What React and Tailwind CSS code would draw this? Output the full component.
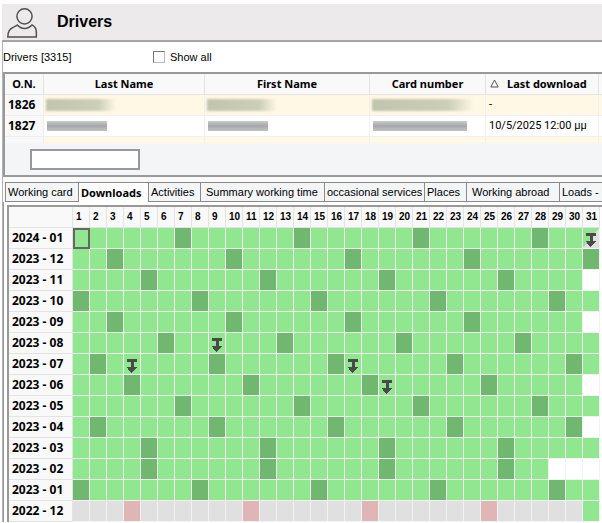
const columns = [
  { label: 'O.N.', width: 'w-[39px]' },
  { label: 'Last Name', width: 'w-[161px]' },
  { label: 'First Name', width: 'w-[165px]' },
  { label: 'Card number', width: 'w-[116px]' },
  { label: 'Last download', width: 'w-[113px]', sorted: true },
]

const drivers = [
  { on: '1826', last: '-', tinted: true },
  { on: '1827', last: '10/5/2025 12:00 μμ', tinted: false },
]

const tabs = [
  { label: 'Working card', width: 'w-[73px]' },
  { label: 'Downloads', width: 'w-[70px]', active: true },
  { label: 'Activities', width: 'w-[52px]' },
  { label: 'Summary working time', width: 'w-[124px]', padded: true },
  { label: 'occasional services', width: 'w-[100px]' },
  { label: 'Places', width: 'w-[42px]' },
  { label: 'Working abroad', width: 'w-[93px]', padded: true },
  { label: 'Loads - U', width: 'w-[110px]' },
]

// sunday = first Sunday of the month, marks = days with a card download
const months = [
  { label: '2024 - 01', sunday: 7, days: 31, marks: [31] },
  { label: '2023 - 12', sunday: 3, days: 31, marks: [] },
  { label: '2023 - 11', sunday: 5, days: 30, marks: [] },
  { label: '2023 - 10', sunday: 1, days: 31, marks: [] },
  { label: '2023 - 09', sunday: 3, days: 30, marks: [] },
  { label: '2023 - 08', sunday: 6, days: 31, marks: [9] },
  { label: '2023 - 07', sunday: 2, days: 31, marks: [4, 17] },
  { label: '2023 - 06', sunday: 4, days: 30, marks: [19] },
  { label: '2023 - 05', sunday: 7, days: 31, marks: [] },
  { label: '2023 - 04', sunday: 2, days: 30, marks: [] },
  { label: '2023 - 03', sunday: 5, days: 31, marks: [] },
  { label: '2023 - 02', sunday: 5, days: 28, marks: [] },
  { label: '2023 - 01', sunday: 1, days: 31, marks: [] },
  { label: '2022 - 12', sunday: 4, days: 31, marks: [], coveredFrom: 31 },
]

const dayNumbers = Array.from({ length: 31 }, (_, i) => i + 1)

function cellColor(month, day) {
  if (day > month.days) return 'bg-white'
  const isSunday = day % 7 === month.sunday % 7
  if (month.coveredFrom && day < month.coveredFrom) {
    return isSunday ? 'bg-[#dfb5b5]' : 'bg-[#e0e0e0]'
  }
  if (month.label === '2024 - 01' && day === 31) {
    return 'bg-linear-to-br from-[#90e790] from-50% to-[#e0e0e0] to-50%'
  }
  return isSunday ? 'bg-[#70b770]' : 'bg-[#90e790]'
}

function UserIcon() {
  return (
    <svg className="h-8 w-8" viewBox="0 0 32 32" fill="none" stroke="#505050" strokeWidth="1.5">
      <circle cx="17.5" cy="10.3" r="7.6" />
      <path d="M0.8 31C0.8 26 2 23 6 21.5C7.5 20.5 9 20 10.3 19C14 23.5 21 23.5 25 19C27 20.3 30 20.5 29.3 31Z" />
    </svg>
  )
}

function DownloadMark() {
  return (
    <svg className="mx-auto mt-1 block h-[14px] w-[10px]" viewBox="0 0 10 14" fill="#4a4a4a" shapeRendering="crispEdges">
      <path d="M0 0H10V3H7V8H10V9H9V10H8V11H7V12H6V13H5V14H4V13H3V12H2V11H1V9H0V8H4V3H0Z" />
    </svg>
  )
}

function Blurred({ tinted, wide }) {
  if (tinted) {
    return (
      <span
        className={`block h-3 bg-linear-to-r from-[#c2c5ae] via-[#cccfb8] via-75% to-[#fff8e5] blur-[1px] ${
          wide ? 'w-[102px]' : 'w-[70px]'
        }`}
      />
    )
  }
  return (
    <span
      className={`ml-px block h-[10px] bg-linear-to-b from-[#c9cccc] via-[#a4a8a8] to-[#c2c5c5] ${
        wide ? 'w-[94px]' : 'w-[60px]'
      }`}
    />
  )
}

function DriversTable() {
  return (
    <div className="border-2 border-r-0 border-[#999] bg-[#f4f5f7] font-['Noto_Sans',sans-serif] text-[11px]">
      <table className="w-full table-fixed border-separate border-spacing-0">
        <thead>
          <tr className="h-[21px] bg-[#f9f9f9]">
            {columns.map((c) => (
              <th
                key={c.label}
                className={`border-r border-b border-[#e3e3e6] p-0 leading-5 font-bold ${c.width} ${
                  c.sorted ? 'pl-1 text-left' : ''
                }`}
              >
                {c.sorted && (
                  <svg className="mr-2 inline-block h-[9px] w-[9px] align-baseline" viewBox="0 0 9 9" fill="none" stroke="#555">
                    <path d="M4.5 1L8.2 8H0.8Z" />
                  </svg>
                )}
                {c.label}
              </th>
            ))}
            <th className="border-b border-[#e3e3e6]" />
          </tr>
        </thead>
        <tbody>
          {drivers.map((d) => (
            <tr key={d.on} className={`h-[21px] ${d.tinted ? 'bg-[#fff8e5]' : 'bg-white'}`}>
              <th className="border-r border-b border-[#ededf0] bg-[#f9f9f9] p-0 pl-[3px] text-left text-[12px] leading-5 font-bold">
                {d.on}
              </th>
              <td className="border-r border-b border-[#f0f0f2] p-0 px-[2px]"><Blurred tinted={d.tinted} /></td>
              <td className="border-r border-b border-[#f0f0f2] p-0 px-[2px]"><Blurred tinted={d.tinted} /></td>
              <td className="border-r border-b border-[#f0f0f2] p-0 px-[2px]"><Blurred tinted={d.tinted} wide /></td>
              <td className="border-r border-b border-[#f0f0f2] p-0 pl-[3px] font-[Roboto,sans-serif] leading-5 whitespace-nowrap">
                {d.last}
              </td>
              <td className="border-b border-[#f0f0f2]" />
            </tr>
          ))}
          <tr className="h-[6px] bg-[#fff8e5]">
            <th className="border-r border-[#ededf0] bg-[#f9f9f9] p-0" />
            <td className="border-r border-[#f0f0f2] p-0" />
            <td className="border-r border-[#f0f0f2] p-0" />
            <td className="border-r border-[#f0f0f2] p-0" />
            <td className="border-r border-[#f0f0f2] p-0" />
            <td className="p-0" />
          </tr>
        </tbody>
      </table>
      <div className="flex pt-[6px] pb-[5px] pl-[25px]">
        <input type="text" aria-label="Find driver" className="h-[21px] w-[110px] border-2 border-[#999] bg-white px-1" />
      </div>
    </div>
  )
}

function TabBar() {
  return (
    <div role="tablist" className="flex h-5 overflow-hidden pl-[2px]">
      {tabs.map((t) => (
        <button
          key={t.label}
          type="button"
          role="tab"
          aria-selected={!!t.active}
          className={`shrink-0 border-t border-l border-[#8a8a8a] text-left text-[11px] whitespace-nowrap last:shrink ${t.width} ${
            t.padded ? 'pl-[5px]' : 'pl-[2px]'
          } ${
            t.active
              ? "bg-white pt-[2px] font-['Noto_Sans',sans-serif] font-bold"
              : "border-b bg-[#f4f5f7] font-['Liberation_Sans',sans-serif]"
          }`}
        >
          {t.label}
        </button>
      ))}
    </div>
  )
}

function DownloadsGrid() {
  return (
    <div className="overflow-hidden border-l border-[#999] bg-white pt-[3px] pl-[3px]">
      <div className="border-t-2 border-l-2 border-[#999]">
        <table className="w-full table-fixed border-separate border-spacing-0">
          <thead>
            <tr className="h-[21px] bg-[#f9f9f9] font-['Liberation_Sans',sans-serif] text-[10px]">
              <th className="w-16 border-r border-b border-[#e3e3e3] p-0" />
              {dayNumbers.map((d) => (
                <th key={d} className="w-[17px] border-r border-b border-[#e3e3e3] p-0 pl-[3px] text-left leading-4 font-bold">
                  {d}
                </th>
              ))}
              <th className="bg-white p-0" />
            </tr>
          </thead>
          <tbody>
            {months.map((m, row) => (
              <tr key={m.label} className="h-[21px]">
                <th className="border-r border-b border-[#e3e3e3] bg-[#f9f9f9] p-0 pl-[3px] text-left font-['Noto_Sans',sans-serif] text-[12px] leading-5 font-bold whitespace-nowrap">
                  {m.label}
                </th>
                {dayNumbers.map((d) => (
                  <td
                    key={d}
                    className={`border-r border-b border-[#f3f3f3] p-0 ${cellColor(m, d)} ${
                      row === 0 && d === 1 ? 'outline-2 -outline-offset-2 outline-[#666]' : ''
                    }`}
                  >
                    {m.marks.includes(d) && <DownloadMark />}
                  </td>
                ))}
                <td className="p-0" />
              </tr>
            ))}
          </tbody>
        </table>
      </div>
    </div>
  )
}

export default function App() {
  return (
    <main className="overflow-hidden bg-white pt-1 pl-[2px] text-black">
      <header className="flex h-[38px] items-center gap-[18px] border-b-2 border-[#a5a3a4] bg-[#eceaeb] pl-[5px]">
        <UserIcon />
        <h1 className="font-['Liberation_Sans',sans-serif] text-base font-bold">Drivers</h1>
      </header>
      <div className="border-l border-[#b4b4b4]">
        <div className="flex h-[30px] items-center font-['Liberation_Sans',sans-serif] text-[11px]">
          <span className="w-[150px]">Drivers [3315]</span>
          <label className="flex items-center gap-[5px]">
            <input
              type="checkbox"
              className="h-3 w-3 appearance-none border border-t-[#777] border-r-[#bbb] border-b-[#bbb] border-l-[#777] bg-white"
            />
            Show all
          </label>
        </div>
        <DriversTable />
        <div className="bg-[#f9f9f9] pt-[5px]">
          <TabBar />
          <DownloadsGrid />
        </div>
      </div>
    </main>
  )
}
